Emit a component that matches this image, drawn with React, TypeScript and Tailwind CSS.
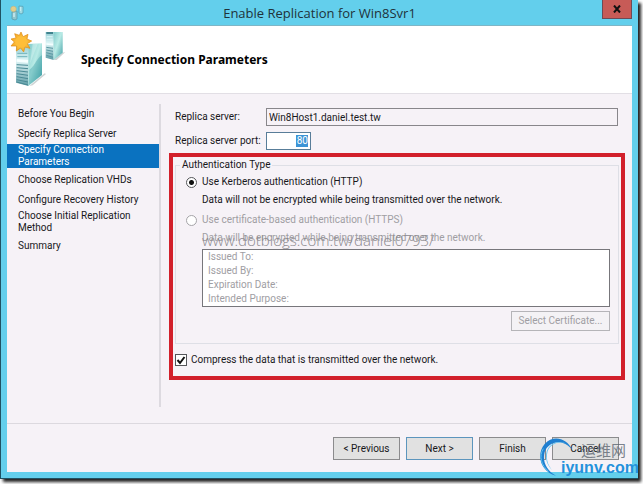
import { useState } from "react";

interface Step {
  title: string;
  lines: 1 | 2;
}

const steps: readonly Step[] = [
  { title: "Before You Begin", lines: 1 },
  { title: "Specify Replica Server", lines: 1 },
  { title: "Specify Connection Parameters", lines: 2 },
  { title: "Choose Replication VHDs", lines: 1 },
  { title: "Configure Recovery History", lines: 1 },
  { title: "Choose Initial Replication Method", lines: 2 },
  { title: "Summary", lines: 1 },
];

const certificateFields: readonly string[] = [
  "Issued To:",
  "Issued By:",
  "Expiration Date:",
  "Intended Purpose:",
];

const TitleIcon = () => (
  <svg width="16" height="16" viewBox="0 0 16 16" className="absolute left-0.5" aria-hidden="true">
    <path d="M3 7l5-1v8l-2 1-3-1z" fill="#8fc7cf" stroke="#5797a8" strokeWidth=".7" />
    <path d="M10 1l4 .4V8l-2 1-2-1z" fill="#9edbe4" stroke="#5599ad" strokeWidth=".7" />
    <path d="M4 9h2M4 11h2M11 3h1M11 5h1" stroke="#e9fbff" />
    <circle cx="4.5" cy="4" r="2.8" fill="#e2ce8c" stroke="#c2b27c" strokeWidth=".6" />
  </svg>
);

const ServersIcon = () => (
  <svg width="60" height="64" viewBox="27 84 180 192" aria-hidden="true">
    <defs>
      <linearGradient id="side" x1="0" y1="0" x2="1" y2="1">
        <stop offset="0" stopColor="#7fcaca" />
        <stop offset=".45" stopColor="#b9ebe6" />
        <stop offset="1" stopColor="#3c9da3" />
      </linearGradient>
      <linearGradient id="front" x1="0" y1="0" x2="0" y2="1">
        <stop offset="0" stopColor="#8fcbd2" />
        <stop offset=".4" stopColor="#dff5f6" />
        <stop offset="1" stopColor="#5d9ca6" />
      </linearGradient>
      <radialGradient id="sun">
        <stop offset="0" stopColor="#ffd95e" />
        <stop offset="1" stopColor="#f6a41c" />
      </radialGradient>
    </defs>
    <path d="M88 258l46-38 4 2-40 34z" fill="#cfd3d4" />
    <path d="M160 180l28-22 8-2-26 24z" fill="#cfd3d4" />
    <path d="M137 96h24v84l-24-7z" fill="url(#front)" />
    <path d="M160 96h28v62l-27 22z" fill="url(#side)" />
    <path d="M139 99h20" stroke="#2f7480" strokeWidth="5" />
    <path d="M140 110h18M140 118h18" stroke="#d3f1f3" strokeWidth="4" />
    <path d="M139 132l20 2" stroke="#f3ffff" strokeWidth="5" />
    <path d="M139 142l20 3M139 150l20 4M139 158l20 5M139 166l20 6" stroke="#5a98a2" strokeWidth="3" />
    <path d="M48 132h38v126l-38-10z" fill="url(#front)" />
    <path d="M85 132l41-2v95l-41 33z" fill="url(#side)" />
    <path d="M88 210c18-14 24-38 38-44v58l-40 32z" fill="#3a9ea4" opacity=".4" />
    <path d="M98 131l-8 60 24-61z" fill="#e3faf7" opacity=".4" />
    <path d="M52 160h30M52 170h30" stroke="#6fb2bb" strokeWidth="3" />
    <path d="M50 181l34 3" stroke="#f7ffff" strokeWidth="8" />
    <path
      d="M50 194l34 2M50 203l34 3M50 212l34 4M50 221l34 5M50 230l34 6M50 239l34 7M50 246l34 9"
      stroke="#4a8a95"
      strokeWidth="3"
    />
    <path
      d="M63 96l6 14 15-7-3 14 14 6-13 8 8 14-15-4-4 15-9-12-13 9 1-15-17 0 10-12-10-9 15-3-4-13 14 5z"
      fill="url(#sun)"
      stroke="#e08d17"
      strokeWidth="2"
    />
    <circle cx="62" cy="126" r="16" fill="#ffbe38" />
  </svg>
);

const SiteMark = () => (
  <div className="pointer-events-none absolute -right-[5px] -bottom-1 h-10 w-[100px]">
    <svg
      width="44"
      height="40"
      viewBox="21 20 132 120"
      className="absolute top-0 left-0"
      aria-hidden="true"
    >
      <path
        d="M126 60C112 28 70 14 44 44 18 74 30 126 78 139 50 124 36 96 44 68 54 38 96 24 126 60z"
        fill="#1f7fd0"
      />
      <path
        d="M116 48C96 32 62 40 53 66 45 92 58 114 68 124 52 110 44 88 50 66 60 36 96 30 116 48z"
        fill="#62c4f2"
      />
      <path d="M40 58C26 80 34 110 56 126" fill="none" stroke="#58c0f0" strokeWidth="3" />
    </svg>
    <span className="absolute top-1 left-11 font-['Noto_Sans_CJK_SC',sans-serif] text-[15px] leading-5 whitespace-nowrap text-[#5b6670]/80">
      运维网
    </span>
    <span className="absolute top-[22px] left-6 font-['Liberation_Sans',sans-serif] text-base leading-5 font-bold text-[#2491dc]">
      iyunv.com
    </span>
  </div>
);

const footerButton =
  "h-[23px] w-[67px] border border-[#8b8b8d] bg-[#e1e1e1] text-center leading-4";

const radio =
  "size-[11px] shrink-0 appearance-none rounded-full border border-[#55565a] bg-white checked:bg-[radial-gradient(circle,#111_0_2px,#fff_3px)] disabled:border-[#a5a4a8]";

const App = () => {
  const [server, setServer] = useState("Win8Host1.daniel.test.tw");
  const [port, setPort] = useState("80");
  const [compress, setCompress] = useState(true);

  return (
    <div className="flex min-h-screen bg-white pr-[5px] pb-[5px] font-['Roboto',sans-serif] text-[10px] leading-4 text-[#18181b]">
      <div className="flex flex-1 flex-col border-b border-l border-[#1f5263] bg-[#63cfec] px-1.5 pb-1.5 shadow-[3px_3px_3px_#222]">
        <header className="relative flex h-[26px] items-center border-b border-[#7fb6c6]">
          <TitleIcon />
          <h1 className="flex-1 text-center font-['Open_Sans',sans-serif] text-[13px] text-[#20323a]">
            Enable Replication for Win8Svr1
          </h1>
          <button
            type="button"
            aria-label="Close"
            className="absolute top-0 right-0 h-[19px] w-[30px] border border-t-0 border-[#6f4a55] bg-[#c75b57]"
          >
            <svg width="8" height="8" viewBox="0 0 8 8" className="mx-auto" aria-hidden="true">
              <path d="M1 .5l6 7M7 .5l-6 7" stroke="#111" strokeWidth="2" />
            </svg>
          </button>
        </header>

        <div className="relative flex flex-1 flex-col bg-[#f6f2f7]">
          <div className="flex h-[68px] items-center gap-3 border-b border-[#e2dfe5] bg-white pl-0.5">
            <ServersIcon />
            <h2 className="font-['Noto_Sans',sans-serif] text-xs font-bold text-black">
              Specify Connection Parameters
            </h2>
          </div>

          <main className="flex flex-1 pb-4">
            <nav className="mt-2.5 w-[154px] shrink-0 border-r-2 border-[#dddae0]">
              <ol>
                {steps.map((step) => {
                  const active = step.title === "Specify Connection Parameters";
                  return (
                    <li
                      key={step.title}
                      className={
                        step.lines === 2
                          ? active
                            ? "mb-0.5 bg-[#0a72c0] pr-10 pl-[11px] leading-3 text-white"
                            : "mb-0.5 pr-6 pl-[11px] leading-3"
                          : "pl-[11px] leading-5"
                      }
                      aria-current={active ? "step" : undefined}
                    >
                      {step.title}
                    </li>
                  );
                })}
              </ol>
            </nav>

            <form className="min-w-0 flex-1 pt-3.5 pr-[7px] pl-2">
              <div className="flex items-center pr-[7px] pl-1.5">
                <label htmlFor="server" className="w-[91px] shrink-0">
                  Replica server:
                </label>
                <input
                  id="server"
                  value={server}
                  onChange={(e) => setServer(e.target.value)}
                  className="h-[18px] min-w-0 flex-1 border border-[#88868b] px-0.5"
                />
              </div>
              <div className="mt-1.5 flex items-center pl-1.5">
                <label htmlFor="port" className="w-[91px] shrink-0 whitespace-nowrap">
                  Replica server port:
                </label>
                <div className="flex h-[18px] w-[45px] justify-end border border-[#587d99] bg-white px-0.5">
                  <input
                    id="port"
                    value={port}
                    onChange={(e) => setPort(e.target.value)}
                    className="h-3 w-3 self-center bg-[#3d94d6] text-right text-white"
                  />
                </div>
              </div>

              <div className="mt-[3px] border-4 border-[#d2202b] px-0.5 pb-2">
                <fieldset className="border border-[#dedfe6] pr-2 pb-3 pl-2.5">
                  <legend className="-ml-1.5 px-0.5">Authentication Type</legend>
                  <label className="flex h-[18px] items-center gap-[5px]">
                    <input type="radio" name="auth" defaultChecked className={radio} />
                    Use Kerberos authentication (HTTP)
                  </label>
                  <p className="pl-4 leading-[18px]">
                    Data will not be encrypted while being transmitted over the network.
                  </p>
                  <label className="mt-0.5 flex h-[18px] items-center gap-[5px] text-[#a09ea3]">
                    <input type="radio" name="auth" disabled className={radio} />
                    Use certificate-based authentication (HTTPS)
                  </label>
                  <div className="relative pl-4 text-[#a09ea3]">
                    <p className="leading-[18px]">
                      Data will be encrypted while being transmitted over the network.
                    </p>
                    <span className="pointer-events-none absolute top-0.5 left-4 font-['Open_Sans',sans-serif] text-[15px] leading-[18px] font-light text-[#8b898e]">
                      www.dotblogs.com.tw/daniel0793/
                    </span>
                  </div>
                  <ul className="mt-0.5 ml-4 border border-[#77767b] bg-white pl-[5px] leading-[14px] text-[#a09ea3]">
                    {certificateFields.map((field) => (
                      <li key={field}>{field}</li>
                    ))}
                  </ul>
                  <button
                    type="button"
                    disabled
                    className="mt-1 ml-auto block h-5 w-[99px] border border-[#b5b4b8] bg-[#f4f2f5] text-[#a09ea3]"
                  >
                    Select Certificate...
                  </button>
                </fieldset>
                <label className="mt-2 flex items-center gap-1">
                  <span className="relative flex">
                    <input
                      type="checkbox"
                      checked={compress}
                      onChange={(e) => setCompress(e.target.checked)}
                      className="peer size-3 appearance-none border border-[#55565a] bg-white"
                    />
                    <svg
                      viewBox="0 0 12 12"
                      className="pointer-events-none absolute inset-0 hidden size-3 peer-checked:block"
                      aria-hidden="true"
                    >
                      <path d="M2.500 6l2.500 3 4.500-6" fill="none" stroke="#111" strokeWidth="2" />
                    </svg>
                  </span>
                  Compress the data that is transmitted over the network.
                </label>
              </div>
            </form>
          </main>

          <footer className="flex justify-end gap-1.5 border-t border-[#dcd9df] pt-[13px] pr-[13px] pb-3">
            <button type="button" className={footerButton}>
              &lt; Previous
            </button>
            <button
              type="button"
              className="h-[23px] w-[67px] border border-[#5c95bd] bg-[#e1e1e1] text-center leading-4"
            >
              Next &gt;
            </button>
            <button type="button" className={footerButton}>
              Finish
            </button>
            <button type="button" className={footerButton}>
              Cancel
            </button>
          </footer>
          <SiteMark />
        </div>
      </div>
    </div>
  );
};

export default App;
